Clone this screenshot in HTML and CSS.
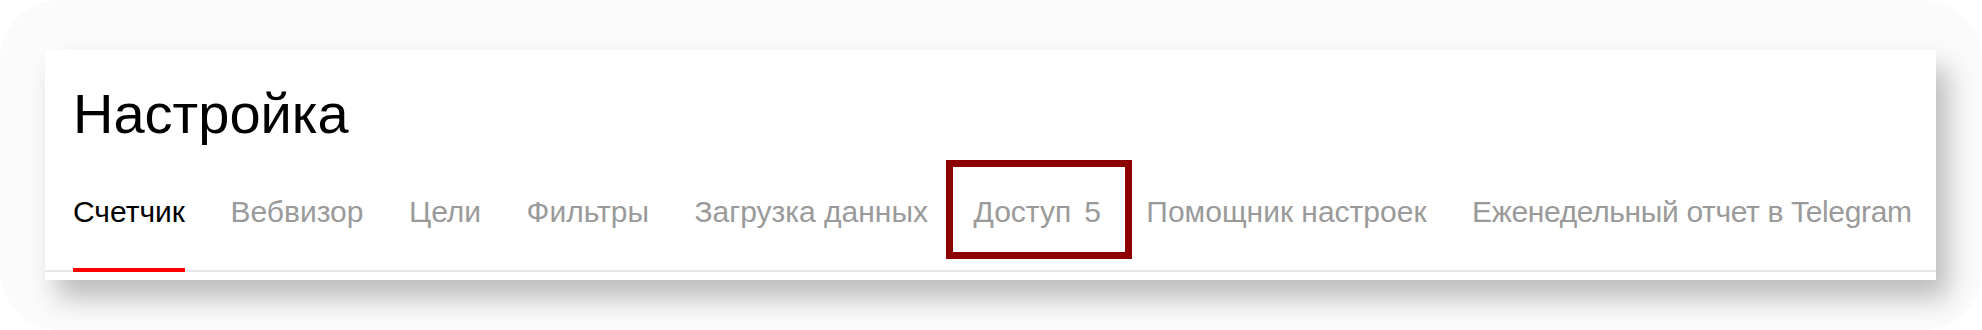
FILE: index.html
```html
<!DOCTYPE html>
<html lang="ru">
<head>
<meta charset="utf-8">
<title>Настройка</title>
<link rel="stylesheet" href="styles.css">
</head>
<body>
<div class="frame">
  <section class="card">
    <h1 class="title">Настройка</h1>
    <nav class="tabs">
      <a class="tab tab-active">Счетчик</a>
      <a class="tab">Вебвизор</a>
      <a class="tab">Цели</a>
      <a class="tab">Фильтры</a>
      <a class="tab">Загрузка данных</a>
      <a class="tab tab-marked">Доступ<span class="counter">5</span><span class="highlight"></span></a>
      <a class="tab">Помощник настроек</a>
      <a class="tab tab-long">Еженедельный отчет в Telegram</a>
    </nav>
  </section>
</div>
</body>
</html>
```

FILE: styles.css
```css
html, body {
  margin: 0;
  padding: 0;
  background: #ffffff;
}

body {
  width: 1982px;
  height: 330px;
  overflow: hidden;
  font-family: "Liberation Sans", Arial, sans-serif;
}

.frame {
  box-sizing: border-box;
  width: 1982px;
  height: 330px;
  padding: 50px 46px 0 45px;
  background: #fbfbfb;
  border-radius: 60px;
}

.card {
  box-sizing: border-box;
  width: 1891px;
  height: 230px;
  background: #ffffff;
  padding: 32px 0 8px 28px;
  box-shadow: 12px 18px 26px rgba(0, 0, 0, 0.25);
  display: flex;
  flex-direction: column;
}

.title {
  margin: 0;
  font-size: 56px;
  line-height: 64px;
  font-weight: 400;
  color: #000000;
}

.tabs {
  margin-top: 46px;
  margin-left: -28px;
  padding-left: 28px;
  display: flex;
  gap: 45.5px;
  box-shadow: inset 0 -2px 0 #e8e8e8;
}

.tab {
  position: relative;
  display: block;
  font-size: 30px;
  line-height: 40px;
  color: #9a9a9a;
  padding-bottom: 36px;
  border-bottom: 4px solid transparent;
  white-space: nowrap;
  cursor: pointer;
}

.tab-active {
  color: #000000;
  border-bottom-color: #ff0000;
}

.tab-long {
  letter-spacing: -0.35px;
}

.counter {
  margin-left: 13px;
}

.highlight {
  position: absolute;
  left: -27px;
  top: -32px;
  width: 172px;
  height: 85px;
  border: 7px solid #8c0000;
}
```
